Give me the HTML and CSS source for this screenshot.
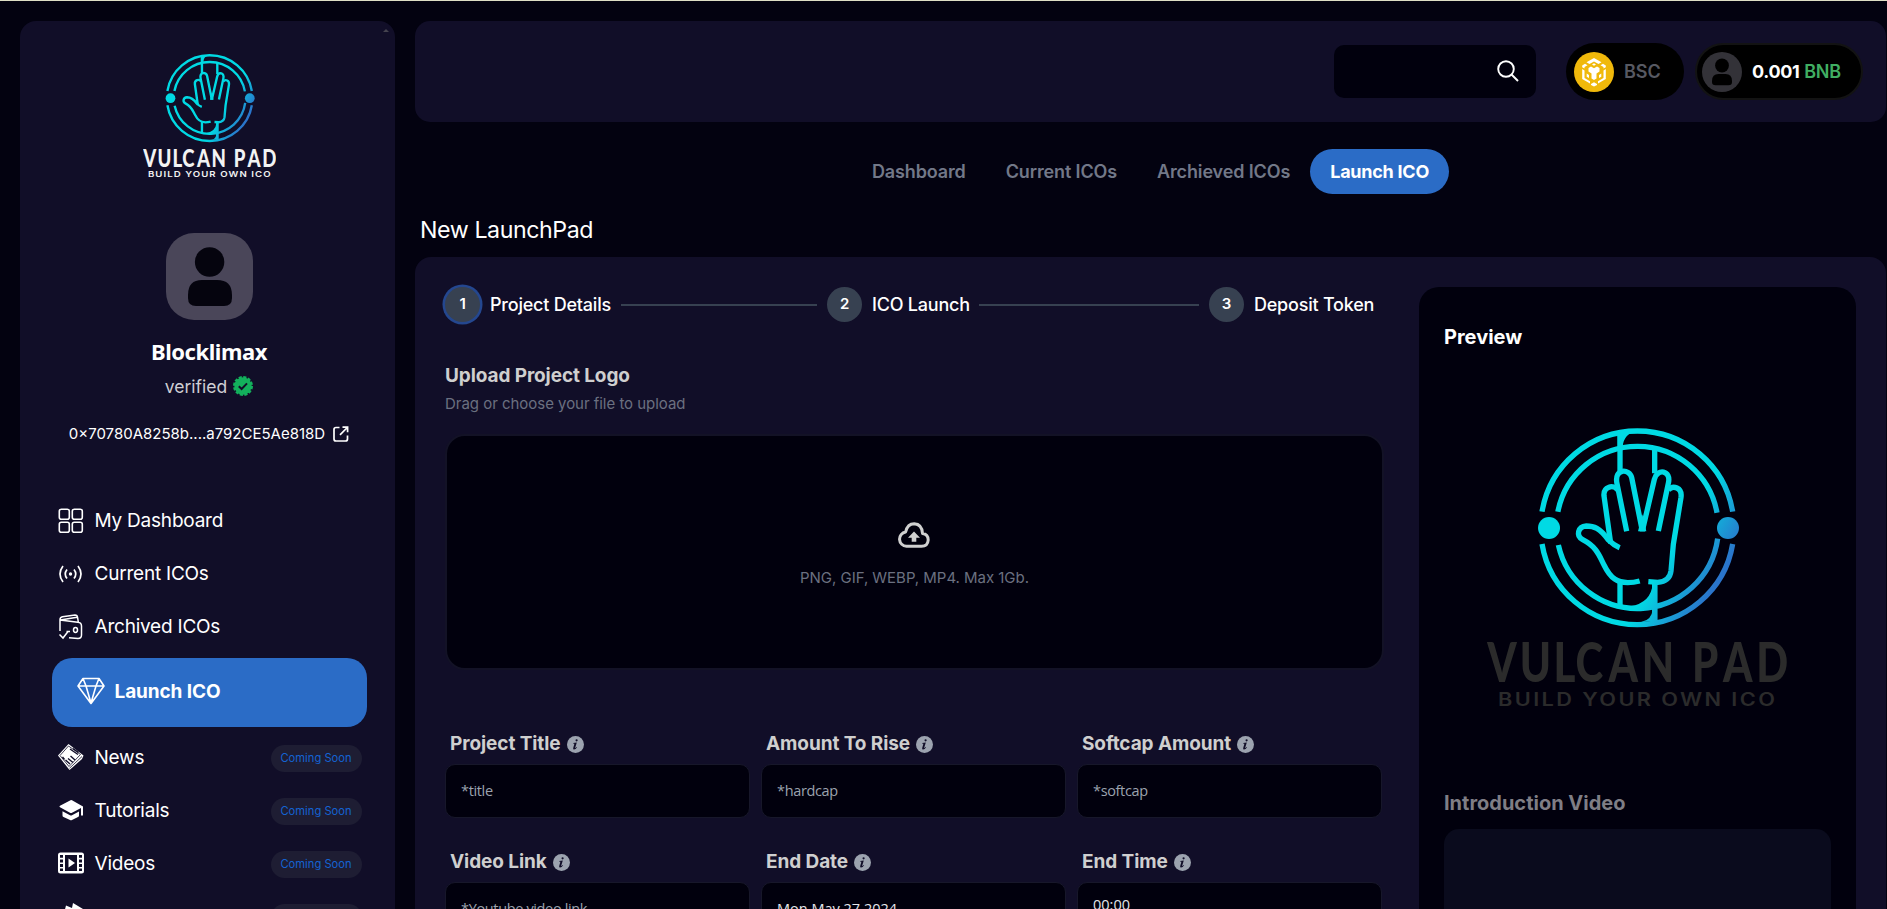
FILE: index.html
```html
<!DOCTYPE html>
<html lang="en">
<head>
<meta charset="utf-8">
<title>Vulcan Pad - New LaunchPad</title>
<link rel="stylesheet" href="styles.css">
</head>
<body>
<svg class="defs" width="0" height="0" aria-hidden="true">
  <defs>
    <linearGradient id="brand" gradientUnits="userSpaceOnUse" x1="814" y1="894" x2="960" y2="979">
      <stop offset="0" stop-color="#00dae4"/><stop offset="1" stop-color="#2a74cb"/>
    </linearGradient>
    <symbol id="logo" viewBox="260 530 905 850">
      <g fill="none" stroke="url(#brand)" stroke-width="16">
        <path d="M425 787A290 290 0 0 1 997 787M425 884A290 290 0 0 0 997 884"/>
        <path d="M472.600 787A243 243 0 0 1 950 790M474 887A243 243 0 0 0 952 868"/>
        <path d="M659 550V668M763 597V672M659 998V1070M763 1000V1118"/>
        <path d="M658 895Q640 888 624 872C598 835 580 830 558 830C532 832 526 860 547 871C590 893 597 920 611 947C632 990 652 999 682 1000Q700 1000 718 995"/>
        <path d="M631 882L611 740C608 712 640 704 652 722"/>
        <path d="M679 846L650 703C640 656 688 657 694 685L726 845L762 690C770 656 814 662 804 702L774 845"/>
        <path d="M804 722C818 706 846 715 842 744L819 885L812 965Q808 997 772 999L744 997"/>
      </g>
      <g fill="url(#brand)">
        <circle cx="446" cy="836" r="33"/><circle cx="983" cy="836" r="33"/>
        <path d="M652 550L712 544Q670 552 667 592H652ZM771 1072L690 1071Q752 1060 757 1004H771ZM771 1116L722 1118Q755 1112 757 1078H771ZM713 846L726 795L738 846Z"/>
      </g>
      <text class="logo-name" transform="scale(.75 1)" x="348 478 613 701 833 966 1100 1167 1291 1424" y="1299">VULCAN PAD</text>
      <text class="logo-tag" x="293" y="1371" textLength="838" lengthAdjust="spacingAndGlyphs">BUILD YOUR OWN ICO</text>
    </symbol>
    <symbol id="info" viewBox="0 0 17 17">
      <circle cx="8.5" cy="8.5" r="8.5" fill="#9ca3af"/>
      <path d="M9.6 3.2a1.1 1.1 0 1 1 0 2.2 1.1 1.1 0 0 1 0-2.2zM6.2 6.9l3.6-.5-1.7 5.6q.7 0 1.6-1l.4.3q-1.5 2.2-3 2.2-1.3 0-.9-1.6l1.2-4.2-1.3-.2z" fill="#110e28"/>
    </symbol>
  </defs>
</svg>

<div class="app">
  <aside class="sidebar">
    <span class="scroll-arrow"></span>
    <svg class="brand-logo"><use href="#logo"/></svg>
    <svg class="avatar" viewBox="0 0 87 87"><rect width="87" height="87" rx="28" fill="#4a4659"/><circle cx="43.6" cy="29" r="14.7" fill="#05040e"/><path d="M22 62q0-15 14-15h15q15 0 15 15v3q0 8-8 8H30q-8 0-8-8z" fill="#05040e"/></svg>
    <h2 class="user-name">Blocklimax</h2>
    <div class="verified"><span>verified</span>
      <svg width="20" height="20" viewBox="0 0 20 20"><circle cx="10" cy="10" r="8.7" fill="#13b05c"/><circle cx="10" cy="10" r="8.5" fill="none" stroke="#13b05c" stroke-width="3" stroke-dasharray="3 1.45"/><path d="M5.8 10.2l2.8 2.8 5.4-5.6" fill="none" stroke="#110e28" stroke-width="2"/></svg>
    </div>
    <div class="address"><span>0×70780A8258b....a792CE5Ae818D</span>
      <svg width="16" height="16" viewBox="0 0 16 16" fill="none" stroke="#fff" stroke-width="1.7"><path d="M6.5 1.5H3Q1 1.500 1 3.500V13Q1 15 3 15H12.500Q14.500 15 14.500 13V9.500M9.500 1.200H14.600V6.300M14.300 1.500L7 8.800"/></svg>
    </div>
    <nav class="menu">
      <a class="menu-item"><svg width="26" height="26" viewBox="0 0 26 26" fill="none" stroke="#fff" stroke-width="1.6"><rect x="1.300" y="1.300" width="10" height="10" rx="2"/><rect x="14.300" y="1.300" width="10" height="10" rx="2"/><rect x="1.300" y="14.300" width="10" height="10" rx="2"/><rect x="14.300" y="14.300" width="10" height="10" rx="2"/></svg><span>My Dashboard</span></a>
      <a class="menu-item"><svg width="26" height="26" viewBox="0 0 26 26" fill="none" stroke="#fff" stroke-width="1.7"><path d="M5 5Q-1 13 5 21M20 5Q26 13 20 21M9 8.500Q5.500 13 9 17.500M16 8.500Q19.500 13 16 17.500"/><circle cx="12.500" cy="13" r="1.700" fill="#fff" stroke="none"/></svg><span>Current ICOs</span></a>
      <a class="menu-item"><svg width="26" height="26" viewBox="0 0 26 26" fill="none" stroke="#fff" stroke-width="1.500"><path d="M2 17V5.500Q2 3.200 4.500 2.700L17 1Q19.300 1 19.600 3.500L20.300 8M2 6L19.800 8.300Q23.500 8.600 23.500 12V21Q23.500 24.500 20 24.500L11 23.800M2.500 6L19 3.200M1.500 20.500L5 24L10 17.500M8.500 17.500H12"/><ellipse cx="17.500" cy="16" rx="2" ry="2.400"/></svg><span>Archived ICOs</span></a>
      <a class="menu-item active"><svg width="28" height="28" viewBox="0 0 28 28" fill="none" stroke="#fff" stroke-width="1.600"><path d="M6 1.500H22L27 9L14 26.500L1 9ZM1 9H27M6 1.500L9 9L14 26L19 9L22 1.500" stroke-linejoin="round"/></svg><span>Launch ICO</span></a>
      <a class="menu-item"><svg width="26" height="26" viewBox="0 0 26 26"><path d="M10.500 0L25.500 11.500L24 15L11.500 26L0 11.500Z" fill="#fff"/><path d="M10.500 2L22.500 10.500L11 22.500L2 11.500ZM24 12.500L11.500 24.200" fill="none" stroke="#110e28" stroke-width=".8"/><path d="M12 5l8 5.500M15 4.500l5.500 4M10 14.500l5 4M7.500 16l4.500 4M12.500 12l4.500 4M4.500 13l2 2.500" stroke="#110e28" stroke-width="1.400"/></svg><span>News</span><em class="badge">Coming Soon</em></a>
      <a class="menu-item"><svg width="26" height="26" viewBox="0 0 26 26"><path d="M12.500 3.200Q13.200 2.900 14 3.300L25 9.500V18.500H23V11L14 15.800Q13 16.300 12 15.800L2 10.300Q.8 9.500 2 8.700ZM4.500 14.300L12 18.300Q13 18.800 14 18.300L21 14.500V18.500Q21 19.500 20 20L14 23Q13 23.500 12 23L5.500 20Q4.500 19.500 4.500 18.500Z" fill="#fff"/></svg><span>Tutorials</span><em class="badge">Coming Soon</em></a>
      <a class="menu-item"><svg width="26" height="26" viewBox="0 0 26 26"><rect y="2.500" width="26" height="21" rx="2.500" fill="#fff"/><path d="M7 5h12v16H7zM2 5h3v2.800H2zM2 9.500h3v3H2zM2 14h3v3H2zM2 18.500h3V21H2zM21 5h3v2.800h-3zM21 9.500h3v3h-3zM21 14h3v3h-3zM21 18.500h3V21h-3z" fill="#110e28"/><path d="M10.500 8.500L17 13L10.500 17.500Z" fill="#fff"/></svg><span>Videos</span><em class="badge">Coming Soon</em></a>
      <a class="menu-item"><svg width="26" height="26" viewBox="0 0 26 26"><path d="M8 2.500L14 5L15 0L25 6V14H5Z" fill="#fff"/></svg><em class="badge"></em></a>
    </nav>
  </aside>

  <main class="main">
    <header class="topbar">
      <div class="search"><svg width="22" height="22" viewBox="0 0 22 22" fill="none" stroke="#fff" stroke-width="1.900"><circle cx="9" cy="9" r="7.800"/><path d="M14.500 14.500L21 21"/></svg></div>
      <div class="pill chain">
        <svg width="40" height="40" viewBox="0 0 40 40"><circle cx="20" cy="20" r="20" fill="#f0b90b"/><g fill="#fff"><path d="M20 6l7.500 4.300-3 1.700L20 9.500 15.500 12l-3-1.700zM20 30.200l3 1.700v1L20 34.600 17 32.900v-1zM14.500 16l2.500-1.400 3 1.700 3-1.700 2.500 1.400v3.600l-3 1.800v5L20 28.100l-2.500-1.700v-5l-3-1.800zM8.200 13.500l2.800-1.700 2.500 1.500-3 1.700v1.500l-2.300-1.200zM31.800 13.500l-2.800-1.700-2.500 1.500 3 1.700v1.500l2.300-1.200zM8.200 17l2.300 1.500v7.500l5.500 3.200v2.400l-7.800-4.500zM31.800 17l-2.300 1.500v7.500l-5.500 3.200v2.400l7.800-4.500z"/><path d="M12.700 21.500v3.200l2.300 1.400v-3.200zM27.300 21.500v3.200L25 26.100v-3.200z"/><path d="M20 11.300l2 1.200-2 1.200-2-1.200z"/></g></svg>
        <span>BSC</span>
      </div>
      <div class="pill wallet">
        <svg width="40" height="40" viewBox="0 0 40 40"><circle cx="20" cy="20" r="20" fill="#333238"/><circle cx="20" cy="13.500" r="6.900"/><path d="M10 29q0-7 6.500-7h7q6.500 0 6.500 7v1q0 3.200-3.500 3.200h-13Q10 33.200 10 30z"/></svg>
        <span>0.001 <b>BNB</b></span>
      </div>
    </header>

    <nav class="tabs"><a>Dashboard</a><a>Current ICOs</a><a>Archieved ICOs</a><a class="current">Launch ICO</a></nav>
    <h1 class="title">New LaunchPad</h1>

    <section class="panel">
      <div class="form">
        <ol class="steps">
          <li class="step on"><i>1</i><span class="s1">Project Details</span></li>
          <li class="rule first"></li>
          <li class="step"><i>2</i><span class="s2">ICO Launch</span></li>
          <li class="rule second"></li>
          <li class="step"><i>3</i><span class="s3">Deposit Token</span></li>
        </ol>
        <h3 class="upload-title">Upload Project Logo</h3>
        <p class="upload-hint">Drag or choose your file to upload</p>
        <div class="dropzone">
          <svg width="32" height="27" viewBox="0 0 32 27"><path d="M8.500 24.300A7.200 7.200 0 0 1 7.600 10Q9.500 1.800 16.200 1.800Q24 2.200 24.500 11.500Q30.200 12.300 30.200 18Q29.800 24.300 23.500 24.300Z" fill="none" stroke="#d0d0d0" stroke-width="3" stroke-linejoin="round"/><path d="M16 9.500l-6 6.300h3.700v4h4.600v-4H22z" fill="#d0d0d0"/></svg>
          <p>PNG, GIF, WEBP, MP4. Max 1Gb.</p>
        </div>
        <div class="fields">
          <label class="field"><span>Project Title <svg><use href="#info"/></svg></span><div class="input">*title</div></label>
          <label class="field"><span>Amount To Rise <svg><use href="#info"/></svg></span><div class="input">*hardcap</div></label>
          <label class="field"><span>Softcap Amount <svg><use href="#info"/></svg></span><div class="input">*softcap</div></label>
          <label class="field"><span>Video Link <svg><use href="#info"/></svg></span><div class="input">*Youtube video link</div></label>
          <label class="field"><span>End Date <svg><use href="#info"/></svg></span><div class="input filled">Mon May 27 2024</div></label>
          <label class="field"><span>End Time <svg><use href="#info"/></svg></span><div class="input filled time">00:00</div></label>
        </div>
      </div>
      <aside class="preview">
        <h3>Preview</h3>
        <svg class="preview-logo"><use href="#logo"/></svg>
        <h3 class="intro">Introduction Video</h3>
        <div class="video"></div>
      </aside>
    </section>
  </main>
</div>
</body>
</html>
```
FILE: styles.css
```css
* { box-sizing: border-box; margin: 0; padding: 0; }
html, body { height: 909px; overflow: hidden; }
body {
  background: #030210;
  border-top: 1px solid #dfdfc5;
  color: #fff;
  font-family: Inter, "Liberation Sans", sans-serif;
}
svg { display: block; flex: none; }
.defs { position: absolute; }
.logo-name { font: 900 168px Lato, sans-serif; }
.logo-tag { font: 600 54px Inter, sans-serif; letter-spacing: 6px; }

.app { display: flex; gap: 20px; height: 908px; padding: 20px 0 0 20px; overflow: hidden; }

.sidebar {
  position: relative;
  display: flex;
  flex-direction: column;
  align-items: center;
  flex: none;
  width: 375px;
  height: 950px;
  padding-top: 31.500px;
  background: #110e28;
  border-radius: 16px;
}
.scroll-arrow {
  position: absolute;
  right: 6px;
  top: 8px;
  border: 3px solid transparent;
  border-top: 0;
  border-bottom-color: #45434f;
}
.brand-logo { width: 133.700px; height: 125.500px; margin-left: 4px; fill: #f3f3f3; }
.avatar { width: 87px; height: 87px; margin: 54.500px 0 0 3px; }
.user-name {
  margin: 16.500px 0 0 3px;
  font: 700 22px/30px "Noto Sans", "Open Sans", sans-serif;
  letter-spacing: -.45px;
}
.verified {
  display: flex;
  align-items: center;
  gap: 6px;
  margin: 7px 0 0 3px;
  height: 26px;
  font-size: 17.500px;
  color: #cfcfd4;
}
.address {
  display: flex;
  align-items: center;
  gap: 8px;
  margin: 21.500px 0 0 3px;
  height: 26px;
  font-size: 15px;
}
.menu { width: 315px; margin: 47px 0 0 3px; }
.menu-item {
  display: flex;
  align-items: center;
  gap: 11px;
  height: 53px;
  padding: 1px 5px 0 6px;
  font-size: 19px;
  letter-spacing: -.22px;
}
.menu-item.active {
  gap: 10px;
  height: 69px;
  margin: 5px 0 3.500px;
  padding: 0 5px 2px 25px;
  border-radius: 20px;
  background: #2b6cc6;
  font-weight: 700;
  letter-spacing: -.1px;
}
.badge {
  margin-left: auto;
  margin-top: 2px;
  width: 91px;
  height: 27px;
  border-radius: 14px;
  background: #1e1d33;
  color: #1463d2;
  font: 400 11.200px/27px Inter, sans-serif;
  text-align: center;
  letter-spacing: 0;
}

.main { display: flex; flex-direction: column; width: 1471px; flex: none; }
.topbar {
  display: flex;
  align-items: center;
  justify-content: flex-end;
  flex: none;
  height: 101px;
  padding-right: 23px;
  background: #110e28;
  border-radius: 15px;
}
.search {
  display: flex;
  justify-content: flex-end;
  align-items: center;
  width: 202px;
  height: 53px;
  margin-right: 30px;
  padding: 0 17px 1px 0;
  border-radius: 10px;
  background: #01000d;
}
.pill {
  display: flex;
  align-items: center;
  gap: 10px;
  height: 57px;
  border-radius: 29px;
  background: #000;
  font-size: 18px;
  font-weight: 600;
}
.chain { width: 118px; margin-right: 11px; padding-left: 8px; color: #575962; }
.wallet { width: 168px; padding-left: 5px; border: 2px solid #131313; font-weight: 700; letter-spacing: -.35px; }
.wallet b { margin-left: 1px; font-weight: 600; color: #40ae62; }

.tabs { display: flex; flex: none; justify-content: center; height: 45px; margin-top: 27px; }
.tabs a { padding: 0 20px; line-height: 45px; font-size: 18px; font-weight: 600; color: #727888; letter-spacing: -.13px; }
.tabs .current { border-radius: 23px; background: #2b6cc6; color: #fff; font-weight: 700; letter-spacing: -.25px; }
.title { flex: none; margin: 20px 0 0 5px; font-size: 23.200px; line-height: 32px; font-weight: 400; letter-spacing: -.42px; }

.panel {
  display: flex;
  flex: none;
  justify-content: space-between;
  height: 700px;
  margin-top: 11px;
  padding: 30px 30px 0;
  background: #110e28;
  border-radius: 16px;
}
.form { width: 939px; }
.steps { display: flex; align-items: center; gap: 10px; height: 35px; list-style: none; }
.step { display: flex; align-items: center; gap: 10px; font-size: 18px; font-weight: 500; white-space: nowrap; letter-spacing: -.22px; }
.step i {
  width: 35px;
  height: 35px;
  border-radius: 50%;
  background: #374151;
  font: 600 15px/34px Inter, sans-serif;
  text-align: center;
}
.step.on i { box-shadow: 0 0 0 2.500px #24478f; }
.s1 { width: 121px; }
.s2 { width: 97px; }
.rule { height: 2px; background: #374151; }
.first { width: 196px; }
.second { width: 220px; }
.upload-title { margin-top: 40.500px; font-size: 19px; line-height: 26px; font-weight: 700; color: #cfcfcf; letter-spacing: -.1px; }
.upload-hint { margin-top: 4.500px; font-size: 15px; line-height: 22px; color: #6b7080; letter-spacing: -.03px; }
.dropzone {
  display: flex;
  flex-direction: column;
  align-items: center;
  height: 236px;
  margin-top: 19px;
  padding: 86px 2px 0 0;
  border: 2px solid #131226;
  border-radius: 20px;
  background: #01000d;
}
.dropzone p { margin-top: 18px; padding-left: 2px; font-size: 15px; line-height: 22px; color: #6b7080; letter-spacing: -.03px; }
.fields {
  display: grid;
  grid-template-columns: repeat(3, 305px);
  column-gap: 11px;
  row-gap: 30px;
  margin-top: 59.500px;
}
.field > span {
  display: flex;
  align-items: center;
  gap: 6px;
  height: 28px;
  padding-left: 5px;
  font-size: 19px;
  font-weight: 700;
  color: #cfcfcf;
  letter-spacing: -.08px;
}
.field svg { width: 17px; height: 17px; margin-top: 2px; }
.input {
  height: 54px;
  margin-top: 6px;
  padding-left: 15px;
  border: 1px solid #17172a;
  border-radius: 10px;
  background: #01000d;
  color: #9ca3af;
  font: 400 14.500px/52px "Open Sans", "Noto Sans", sans-serif;
  letter-spacing: -.35px;
}
.filled { color: #e5e7eb; letter-spacing: 0; }
.time { line-height: 44px; }

.preview { width: 437px; height: 690px; padding: 36.500px 25px 0; border-radius: 20px; background: #01000d; }
.preview h3 { font-size: 20px; line-height: 26px; font-weight: 700; letter-spacing: 0; }
.preview-logo { width: 301.700px; height: 283.300px; margin: 76.500px 0 0 43px; fill: #2b2b2b; }
.preview .intro { margin-top: 80.500px; color: #7f7e85; }
.video { height: 200px; margin-top: 13px; border-radius: 15px; background: #0a0b1d; }
```
